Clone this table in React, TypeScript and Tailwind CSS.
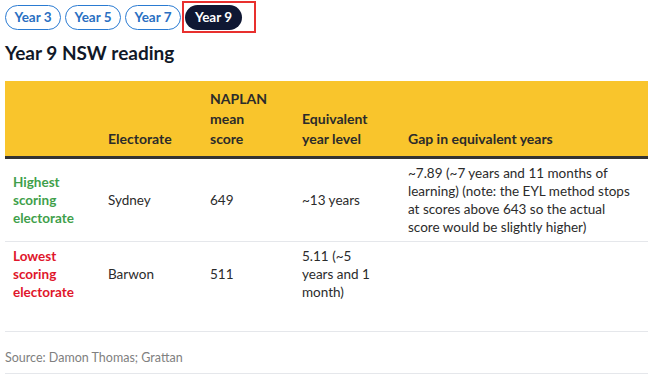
import { useState } from 'react'

const tabs = ['Year 3', 'Year 5', 'Year 7', 'Year 9']

export default function App() {
  const [active, setActive] = useState('Year 9')

  return (
    <div className="w-[653px] h-[378px] bg-white overflow-hidden font-['Lato',sans-serif] text-[#2b2b2b]">
      {/* Tabs */}
      <div className="flex items-center gap-[4px] pl-[5px] pt-[4px]">
        {tabs.map((t) => (
          <div
            key={t}
            className={t === active ? 'border-2 border-[#e8302e] p-[1px] -ml-[3px] -my-[3px]' : ''}
          >
            <button
              onClick={() => setActive(t)}
              className={`h-[25px] w-[56px] rounded-full text-[13.5px] font-bold leading-none ${
                t === active
                  ? 'bg-[#0f1733] text-white w-[57px] mr-[11px]'
                  : 'border border-[#2a7bd2] text-[#2a6fc2] bg-white'
              }`}
            >
              {t}
            </button>
          </div>
        ))}
      </div>

      <h2 className="px-[5px] mt-[9px] text-[19px] font-bold text-[#111827] leading-[28px]">Year 9 NSW reading</h2>

      {/* Table */}
      <div className="mx-[5px] mt-[14px] w-[643px]">
        <div className="grid grid-cols-[95px_102px_92px_106px_1fr] bg-[#f9c52c] border-b-[3px] border-[#333] items-end text-[14px] font-bold leading-[20px] pb-[7px] pt-[8px]">
          <div className="pl-[8px]"></div>
          <div className="pl-[8px]">Electorate</div>
          <div className="pl-[8px]">NAPLAN<br />mean<br />score</div>
          <div className="pl-[8px]">Equivalent<br />year level</div>
          <div className="pl-[8px]">Gap in equivalent years</div>
        </div>

        <div className="grid grid-cols-[95px_102px_92px_106px_1fr] items-center text-[13.5px] leading-[18px] border-b border-[#e5e7eb] py-[5px]">
          <div className="pl-[8px] font-bold text-[#3f9f4b]">Highest<br />scoring<br />electorate</div>
          <div className="pl-[8px]">Sydney</div>
          <div className="pl-[8px]">649</div>
          <div className="pl-[8px]">~13 years</div>
          <div className="pl-[8px] pr-[8px]">~7.89 (~7 years and 11 months of learning) (note: the EYL method stops at scores above 643 so the actual score would be slightly higher)</div>
        </div>

        <div className="grid grid-cols-[95px_102px_92px_106px_1fr] items-start text-[13.5px] leading-[18px] border-b border-[#e5e7eb] pt-[5px] h-[90px]">
          <div className="pl-[8px] font-bold text-[#e0162b]">Lowest<br />scoring<br />electorate</div>
          <div className="pl-[8px] pt-[18px]">Barwon</div>
          <div className="pl-[8px] pt-[18px]">511</div>
          <div className="pl-[8px]">5.11 (~5<br />years and 1<br />month)</div>
          <div></div>
        </div>

        <div className="text-[12.5px] text-[#808080] pt-[17px] pb-[6px] leading-[18px] border-b border-[#e5e7eb]">Source: Damon Thomas; Grattan</div>
      </div>
    </div>
  )
}
